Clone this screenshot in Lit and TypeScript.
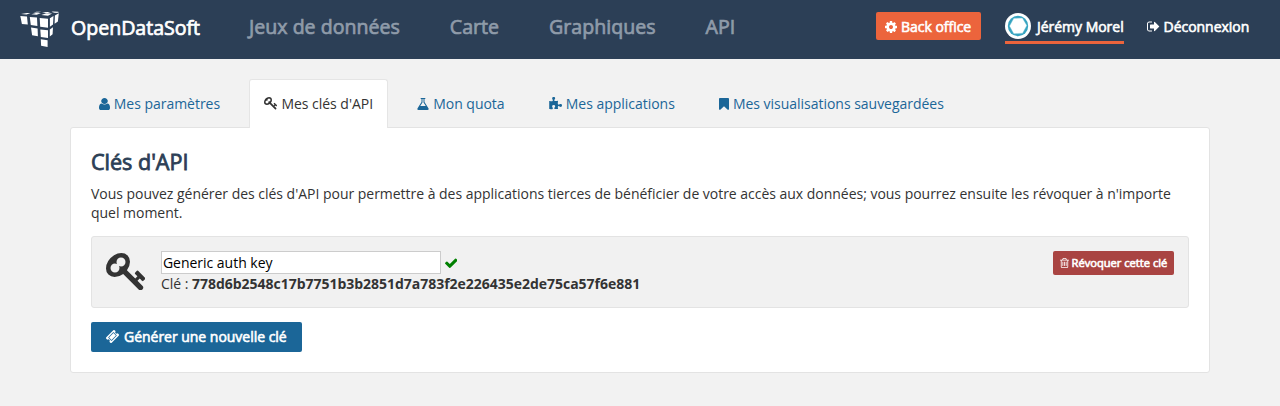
import { LitElement, html, css, svg } from "lit";
import { customElement } from "lit/decorators.js";

type Icon = { box: string; w: number; h: number; d: string };

const ICONS: Record<string, Icon> = {
  cog: { box: "128 128 1536 1536", w: 12, h: 12, d: "M1152 896q0-106-75-181t-181-75-181 75-75 181 75 181 181 75 181-75 75-181zm512-109v222q0 12-8 23t-20 13l-185 28q-19 54-39 91 35 50 107 138 10 12 10 25t-9 23q-27 37-99 108t-94 71q-12 0-26-9l-138-108q-44 23-91 38-16 136-29 186-7 28-36 28h-222q-14 0-24.5-8.5t-11.5-21.5l-28-184q-49-16-90-37l-141 107q-10 9-25 9-14 0-25-11-126-114-165-168-7-10-7-23 0-12 8-23 15-21 51-66.5t54-70.5q-27-50-41-99l-183-27q-13-2-21-12.5t-8-23.5v-222q0-12 8-23t19-13l186-28q14-46 39-92-40-57-107-138-10-12-10-24 0-10 9-23 26-36 98.5-107.5t94.5-71.5q13 0 26 10l138 107q44-23 91-38 16-136 29-186 7-28 36-28h222q14 0 24.5 8.5t11.5 21.5l28 184q49 16 90 37l142-107q9-9 24-9 13 0 25 10 129 119 165 170 7 8 7 22 0 12-8 23-15 21-51 66.5t-54 70.5q26 50 41 98l183 28q13 2 21 12.5t8 23.5z" },
  user: { box: "256 128 1280 1536", w: 11, h: 12, d: "M1536 1399q0 109-62.5 187t-150.5 78h-854q-88 0-150.5-78t-62.5-187q0-85 8.5-160.5t31.5-152 58.5-131 94-89 134.5-34.5q131 128 313 128t313-128q76 0 134.5 34.5t94 89 58.5 131 31.5 152 8.5 160.5zm-256-887q0 159-112.5 271.5t-271.5 112.5-271.5-112.5-112.5-271.5 112.5-271.5 271.5-112.5 271.5 112.5 112.5 271.5z" },
  key: { box: "0 128 1683 1592", w: 13.15, h: 12.44, d: "M832 512q0-80-56-136t-136-56-136 56-56 136q0 42 19 83-41-19-83-19-80 0-136 56t-56 136 56 136 136 56 136-56 56-136q0-42-19-83 41 19 83 19 80 0 136-56t56-136zm851 704q0 17-49 66t-66 49q-9 0-28.5-16t-36.5-33-38.5-40-24.5-26l-96 96 220 220q28 28 28 68 0 42-39 81t-81 39q-40 0-68-28l-671-671q-176 131-365 131-163 0-265.5-102.5t-102.5-265.5q0-160 95-313t248-248 313-95q163 0 265.5 102.5t102.5 265.5q0 189-131 365l355 355 96-96q-3-3-26-24.5t-40-38.5-33-36.5-16-28.5q0-17 49-66t66-49q13 0 23 10 6 6 46 44.5t82 79.5 86.5 86 73 78 28.5 41z" },
  flask: { box: "128 128 1536 1536", w: 12, h: 12, d: "M1591 1448q56 89 21.5 152.5t-140.5 63.5h-1152q-106 0-140.5-63.5t21.5-152.5l503-793v-399h-64q-26 0-45-19t-19-45 19-45 45-19h512q26 0 45 19t19 45-19 45-45 19h-64v399zm-779-725l-272 429h712l-272-429-20-31v-436h-128v436z" },
  puzzle: { box: "64 0 1691 1664", w: 13, h: 13, d: "M1755 1082q0 81-44.5 135t-123.5 54q-41 0-77.5-17.5t-59-38-56.5-38-71-17.5q-110 0-110 124 0 39 16 115t15 115v5q-22 0-33 1-34 3-97.5 11.5t-115.5 13.5-98 5q-61 0-103-26.5t-42-83.5q0-37 17.5-71t38-56.5 38-59 17.5-77.5q0-79-54-123.5t-135-44.5q-84 0-143 45.5t-59 127.5q0 43 15 83t33.5 64.5 33.5 53 15 50.5q0 45-46 89-37 35-117 35-95 0-245-24-9-2-27.5-4t-27.5-4l-13-2q-1 0-3-1-2 0-2-1v-1024q2 1 17.5 3.5t34 5 21.5 3.5q150 24 245 24 80 0 117-35 46-44 46-89 0-22-15-50.5t-33.5-53-33.5-64.5-15-83q0-82 59-127.5t144-45.5q80 0 134 44.5t54 123.5q0 41-17.5 77.5t-38 59-38 56.5-17.5 71q0 57 42 83.5t103 26.5q64 0 180-15t163-17v2q-1 2-3.5 17.5t-5 34-3.5 21.5q-24 150-24 245 0 80 35 117 44 46 89 46 22 0 50.5-15t53-33.5 64.5-33.5 83-15q82 0 127.5 59t45.5 143z" },
  bookmark: { box: "256 128 1280 1536", w: 10, h: 12, d: "M1420 128q23 0 44 9 33 13 52.5 41t19.5 62v1289q0 34-19.5 62t-52.5 41q-19 8-44 8-48 0-83-32l-441-424-441 424q-36 33-83 33-23 0-44-9-33-13-52.5-41t-19.5-62v-1289q0-34 19.5-62t52.5-41q21-9 44-9h1048z" },
  signout: { box: "64 192 1600 1408", w: 12.5, h: 11, d: "M704 1440q0 4 1 20t.5 26.5-3 23.5-10 19.5-20.5 6.5h-320q-119 0-203.5-84.5t-84.5-203.5v-704q0-119 84.5-203.5t203.5-84.5h320q13 0 22.5 9.5t9.5 22.5q0 4 1 20t.5 26.5-3 23.5-10 19.5-20.5 6.5h-320q-66 0-113 47t-47 113v704q0 66 47 113t113 47h312l11.5 1 11.5 3 8 5.5 7 9 2 13.5zm928-544q0 26-19 45l-544 544q-19 19-45 19t-45-19-19-45v-288h-448q-26 0-45-19t-19-45v-384q0-26 19-45t45-19h448v-288q0-26 19-45t45-19 45 19l544 544q19 19 19 45z" },
  check: { box: "121 270 1550 1252", w: 12.5, h: 10, d: "M1671 566q0 40-28 68l-724 724-136 136q-28 28-68 28t-68-28l-136-136-362-362q-28-28-28-68t28-68l136-136q28-28 68-28t68 28l294 295 656-657q28-28 68-28t68 28l136 136q28 28 28 68z" },
  trash: { box: "192 128 1408 1536", w: 9, h: 10, d: "M704 736v576q0 14-9 23t-23 9h-64q-14 0-23-9t-9-23v-576q0-14 9-23t23-9h64q14 0 23 9t9 23zm256 0v576q0 14-9 23t-23 9h-64q-14 0-23-9t-9-23v-576q0-14 9-23t23-9h64q14 0 23 9t9 23zm256 0v576q0 14-9 23t-23 9h-64q-14 0-23-9t-9-23v-576q0-14 9-23t23-9h64q14 0 23 9t9 23zm128 724v-948h-896v948q0 22 7 40.5t14.5 27 10.5 8.5h832q3 0 10.5-8.5t14.5-27 7-40.5zm-672-1076h448l-48-117q-7-9-17-11h-317q-10 2-17 11zm928 32v64q0 14-9 23t-23 9h-96v948q0 83-47 143.5t-113 60.5h-832q-66 0-113-58.5t-47-141.5v-952h-96q-14 0-23-9t-9-23v-64q0-14 9-23t23-9h309l70-167q15-37 54-63t79-26h320q40 0 79 26t54 63l70 167h309q14 0 23 9t9 23z" },
  ticket: { box: "53 53 1686 1686", w: 13, h: 13, d: "M1024 452l316 316-572 572-316-316zm-211 979l618-618q19-19 19-45t-19-45l-362-362q-18-18-45-18t-45 18l-618 618q-19 19-19 45t19 45l362 362q18 18 45 18t45-18zm889-637l-907 908q-37 37-90.5 37t-90.5-37l-126-126q56-56 56-136t-56-136-136-56-136 56l-125-126q-37-37-37-90.5t37-90.5l907-906q37-37 90.5-37t90.5 37l125 125q-56 56-56 136t56 136 136 56 136-56l126 125q37 37 37 90.5t-37 90.5z" },
};

const icon = (name: string, scale = 1) => {
  const i = ICONS[name];
  return html`<svg class="icon ${name}" viewBox=${i.box} width=${i.w * scale} height=${i.h * scale}
    preserveAspectRatio="none" fill="currentColor" aria-hidden="true">${svg`<path d=${i.d}></path>`}</svg>`;
};

const TABS = [
  { icon: "user", label: "Mes paramètres", active: false },
  { icon: "key", label: "Mes clés d'API", active: true },
  { icon: "flask", label: "Mon quota", active: false },
  { icon: "puzzle", label: "Mes applications", active: false },
  { icon: "bookmark", label: "Mes visualisations sauvegardées", active: false },
];

@customElement("app-root")
export class AppRoot extends LitElement {
  static styles = css`
    :host {
      display: block;
      min-height: 406px;
      background: #f2f2f2;
      color: #333;
      font: 14px/19px "Open Sans", sans-serif;
      letter-spacing: -0.023px;
    }
    * { box-sizing: border-box; }
    a { color: inherit; text-decoration: none; white-space: nowrap; }
    .icon { display: block; flex: none; }
    header {
      display: flex;
      height: 59px;
      padding: 0 30px 0 20px;
      background: #2c3f56;
      color: #fff;
    }
    .brand, nav { font-size: 19.6px; line-height: 34px; -webkit-text-stroke: 0.7px currentColor; }
    .brand { display: flex; gap: 11px; padding-top: 11px; width: 229px; }
    .brand svg { display: block; flex: none; }
    nav { display: flex; gap: 50px; padding-top: 10px; color: #8f9ba9; letter-spacing: 0; }
    .account { display: flex; align-items: flex-start; margin-left: auto; padding-top: 12px; }
    .account span, .revoke span, .create span { -webkit-text-stroke: 0.6px currentColor; }
    .office {
      display: flex; align-items: center; gap: 4px; width: 105px; height: 28px; padding: 1px 0 0 9px;
      border-radius: 2px; background: #ec643c;
    }
    .me { display: flex; gap: 6px; align-items: center; margin: 1px 0 0 24px; width: 119px; height: 31px; padding-bottom: 2px; border-bottom: 3px solid #ec643c; }
    .me svg { display: block; flex: none; }
    .exit { display: flex; gap: 4px; align-items: center; height: 28px; margin-left: 23px; width: 103px; padding-top: 1px; }
    main { width: 1140px; margin: 20px auto 0; }
    .tabs { display: flex; gap: 14.15px; padding-left: 13.75px; height: 48px; }
    .tab {
      display: flex; gap: 4px; align-items: center; height: 49px; padding: 0 14px 1px;
      border: 1px solid transparent; border-bottom: 0; border-radius: 3px 3px 0 0; color: #1b6698;
    }
    .tab.active { position: relative; background: #fff; border-color: #e5e5e5; color: #333; }
    .panel { height: 246px; padding: 20px; background: #fff; border: 1px solid #e3e3e3; border-radius: 3px; }
    h1 { margin: 0; font-size: 21.6px; line-height: 28px; font-weight: 400; -webkit-text-stroke: 0.8px currentColor; color: #2c3f56; }
    p { margin: 8px 0 14px; line-height: 19px; }
    .entry { display: flex; height: 72px; padding: 14px; background: #f1f1f1; border: 1px solid #e3e3e3; border-radius: 3px; }
    .entry > .icon { margin-top: 2px; }
    .details { margin-left: 15.5px; flex: 1; }
    .field { display: flex; align-items: center; gap: 4px; color: green; }
    .field input { width: 280px; height: 23px; padding: 1px; border: 1px solid #ccc; border-radius: 0; color: #000; background: #fff; font: inherit; letter-spacing: inherit; outline: 0; }
    .value { line-height: 20px; }
    .revoke, .create { display: flex; align-items: center; border: 0; border-radius: 2px; color: #fff; font: 14px/19px "Open Sans", sans-serif; letter-spacing: inherit; white-space: nowrap; }
    .revoke { gap: 3px; width: 121px; height: 24px; padding: 0 0 1px 6.5px; background: #a94442; font-size: 11.2px; }
    .create { gap: 5px; width: 211px; height: 30px; margin-top: 14px; padding: 0 0 1px 15px; background: #1b6698; }
  `;

  render() {
    return html`
      <header>
        <a class="brand">
          <svg width="40" height="36" viewBox="0 0 40 36" fill="#fff" aria-hidden="true">
            <path d="M1 3.1 7 1.9l3.5.2-4 1.4zM11.3 3.3 16 1.9l5 .3-4.5 1.5zM21.3 4.1 26.2 2.2l5.9.3-4.1 2.2zM13.5 1.5l3-.8 4.6.1-3 .8zM22 1.8l3.2-.9 5.3.1-2.7.9zM32 2 34.5 1.2 39.4 1l-2.2 1zM31.5 1l1.2-.4 6 .1-.6.2z"/>
            <path d="M.3 5 7 5.4l.8 8L1.9 12.9zM9.8 6l7.2.5.4 8.4-6.6-.9zM19.7 7l8.3.8v8.9l-7.8-1zM29.9 7.2l3.6-2.2-.5 8.5-3.1 2.2zM34.9 4.5 38.8 2.3l-.9 8.1-3.3 2.3z"/>
            <path d="m11 16.6 6.6.9.3 7.7-5.8-1zM20.3 18.4l7.7.9v7.6l-7.2-.9zM29.8 18.6l3.2-2.3-.4 6.9-2.8 2.3zM20.8 28.3l6.8 1v6.6l-6.5-1.2z"/>
          </svg>
          <span>OpenDataSoft</span>
        </a>
        <nav><a>Jeux de données</a><a>Carte</a><a>Graphiques</a><a>API</a></nav>
        <div class="account">
          <a class="office">${icon("cog")}<span>Back office</span></a>
          <a class="me">
            <svg width="26" height="26" viewBox="0 0 26 26" aria-hidden="true">
              <circle cx="13" cy="13" r="13" fill="#fff"/>
              <circle cx="13" cy="13" r="10.2" fill="#36a3c0"/>
              <path d="m8.8 5.3 8.6-.3 4.4 7.5-4.2 7.7-8.8.6-4.3-7.7z" fill="#fff" stroke="#75c5d7" stroke-width=".4"/>
            </svg>
            <span>Jérémy Morel</span>
          </a>
          <a class="exit">${icon("signout")}<span>Déconnexion</span></a>
        </div>
      </header>
      <main>
        <div class="tabs">
          ${TABS.map((t) => html`<a class="tab ${t.active ? "active" : ""}">${icon(t.icon)}<span>${t.label}</span></a>`)}
        </div>
        <section class="panel">
          <h1>Clés d'API</h1>
          <p>Vous pouvez générer des clés d'API pour permettre à des applications tierces de bénéficier de votre accès aux données; vous pourrez ensuite les révoquer à n'importe quel moment.</p>
          <div class="entry">
            ${icon("key", 3)}
            <div class="details">
              <div class="field"><input type="text" .value=${"Generic auth key"} />${icon("check")}</div>
              <div class="value">Clé : <b>778d6b2548c17b7751b3b2851d7a783f2e226435e2de75ca57f6e881</b></div>
            </div>
            <button class="revoke">${icon("trash")}<span>Révoquer cette clé</span></button>
          </div>
          <button class="create">${icon("ticket")}<span>Générer une nouvelle clé</span></button>
        </section>
      </main>
    `;
  }
}
